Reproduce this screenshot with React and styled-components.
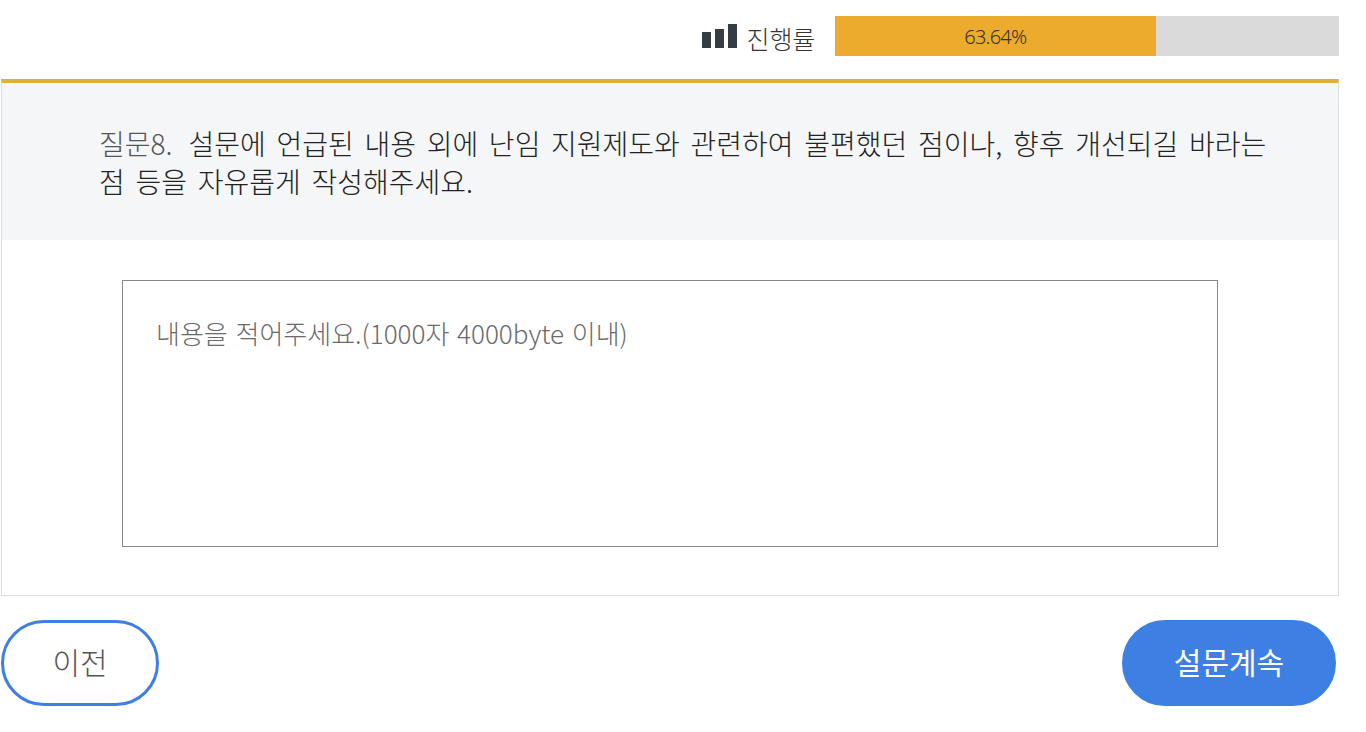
import React from 'react';
import styled, { createGlobalStyle } from 'styled-components';

const GlobalStyle = createGlobalStyle`
  html, body {
    margin: 0;
    padding: 0;
    background: #fff;
    font-family: "Noto Sans CJK KR", "Noto Sans", sans-serif;
  }
`;

const Page = styled.div`
  width: 1339px;
  padding-top: 16px;
`;

const ProgressRow = styled.div`
  display: flex;
  justify-content: flex-end;
  align-items: center;
  height: 40px;
  margin-bottom: 23px;
`;

const ProgressLabel = styled.span`
  display: flex;
  align-items: center;
  gap: 10px;
  margin-right: 20px;
  font-size: 25px;
  font-weight: 300;
  color: #333;
  letter-spacing: -0.2px;
`;

const LabelText = styled.span`
  margin-top: 4px;
`;

const Track = styled.div`
  position: relative;
  width: 504px;
  height: 40px;
  background: #dadada;
`;

const Fill = styled.div`
  height: 100%;
  background: #edab2d;
  display: flex;
  align-items: center;
  justify-content: center;
  font-size: 20px;
  letter-spacing: -0.8px;
  color: #333;
  font-family: "Noto Sans", sans-serif;
  font-weight: 300;
`;

const Panel = styled.div`
  margin-left: 1px;
  border-top: 4px solid #e4ae3f;
  border-left: 1px solid #ddd;
  border-right: 1px solid #ddd;
  border-bottom: 1px solid #ddd;
  box-sizing: border-box;
  height: 517px;
`;

const QuestionBox = styled.div`
  background: #f4f6f7;
  height: 157px;
  box-sizing: border-box;
  padding: 41px 60px 0 97px;
  font-size: 28px;
  line-height: 38px;
  color: #222;
  font-weight: 300;
  word-spacing: 4.5px;
`;

const QuestionNo = styled.span`
  color: #555;
  margin-right: 16px;
`;

const AnswerWrap = styled.div`
  padding: 40px 120px 0;
`;

const Answer = styled.textarea`
  display: block;
  width: 1096px;
  height: 267px;
  box-sizing: border-box;
  border: 1px solid #888;
  padding: 33px 33px;
  resize: none;
  outline: none;
  font-family: inherit;
  font-size: 26px;
  line-height: 38px;
  font-weight: 300;
  word-spacing: 2px;
  &::placeholder {
    color: #6a6a6a;
    opacity: 1;
  }
`;

const ButtonRow = styled.div`
  display: flex;
  justify-content: space-between;
  padding: 24px 3px 0 1px;
`;

const PillButton = styled.button`
  height: 86px;
  width: ${p => (p.$primary ? '214px' : '158px')};
  box-sizing: border-box;
  border-radius: 43px;
  border: 3px solid #3d7fe2;
  background: ${p => (p.$primary ? '#3d7fe2' : '#fff')};
  color: ${p => (p.$primary ? '#fff' : '#555')};
  font-family: inherit;
  font-size: 30px;
  font-weight: ${p => (p.$primary ? 400 : 300)};
  padding: 0 0 4px;
`;

const BarsIcon = () => (
  <svg width="35" height="24" viewBox="0 0 35 24" fill="#343c44">
    <rect x="0" y="8" width="9" height="16" />
    <rect x="13" y="5" width="9" height="19" />
    <rect x="26" y="0" width="9" height="24" />
  </svg>
);

export default function App() {
  return (
    <Page>
      <GlobalStyle />
      <ProgressRow>
        <ProgressLabel>
          <BarsIcon />
          <LabelText>진행률</LabelText>
        </ProgressLabel>
        <Track>
          <Fill style={{ width: '63.64%' }}>63.64%</Fill>
        </Track>
      </ProgressRow>
      <Panel>
        <QuestionBox>
          <QuestionNo>질문8.</QuestionNo>
          설문에 언급된 내용 외에 난임 지원제도와 관련하여 불편했던 점이나, 향후 개선되길 바라는 점 등을 자유롭게 작성해주세요.
        </QuestionBox>
        <AnswerWrap>
          <Answer placeholder="내용을 적어주세요.(1000자 4000byte 이내)" />
        </AnswerWrap>
      </Panel>
      <ButtonRow>
        <PillButton>이전</PillButton>
        <PillButton $primary>설문계속</PillButton>
      </ButtonRow>
    </Page>
  );
}
